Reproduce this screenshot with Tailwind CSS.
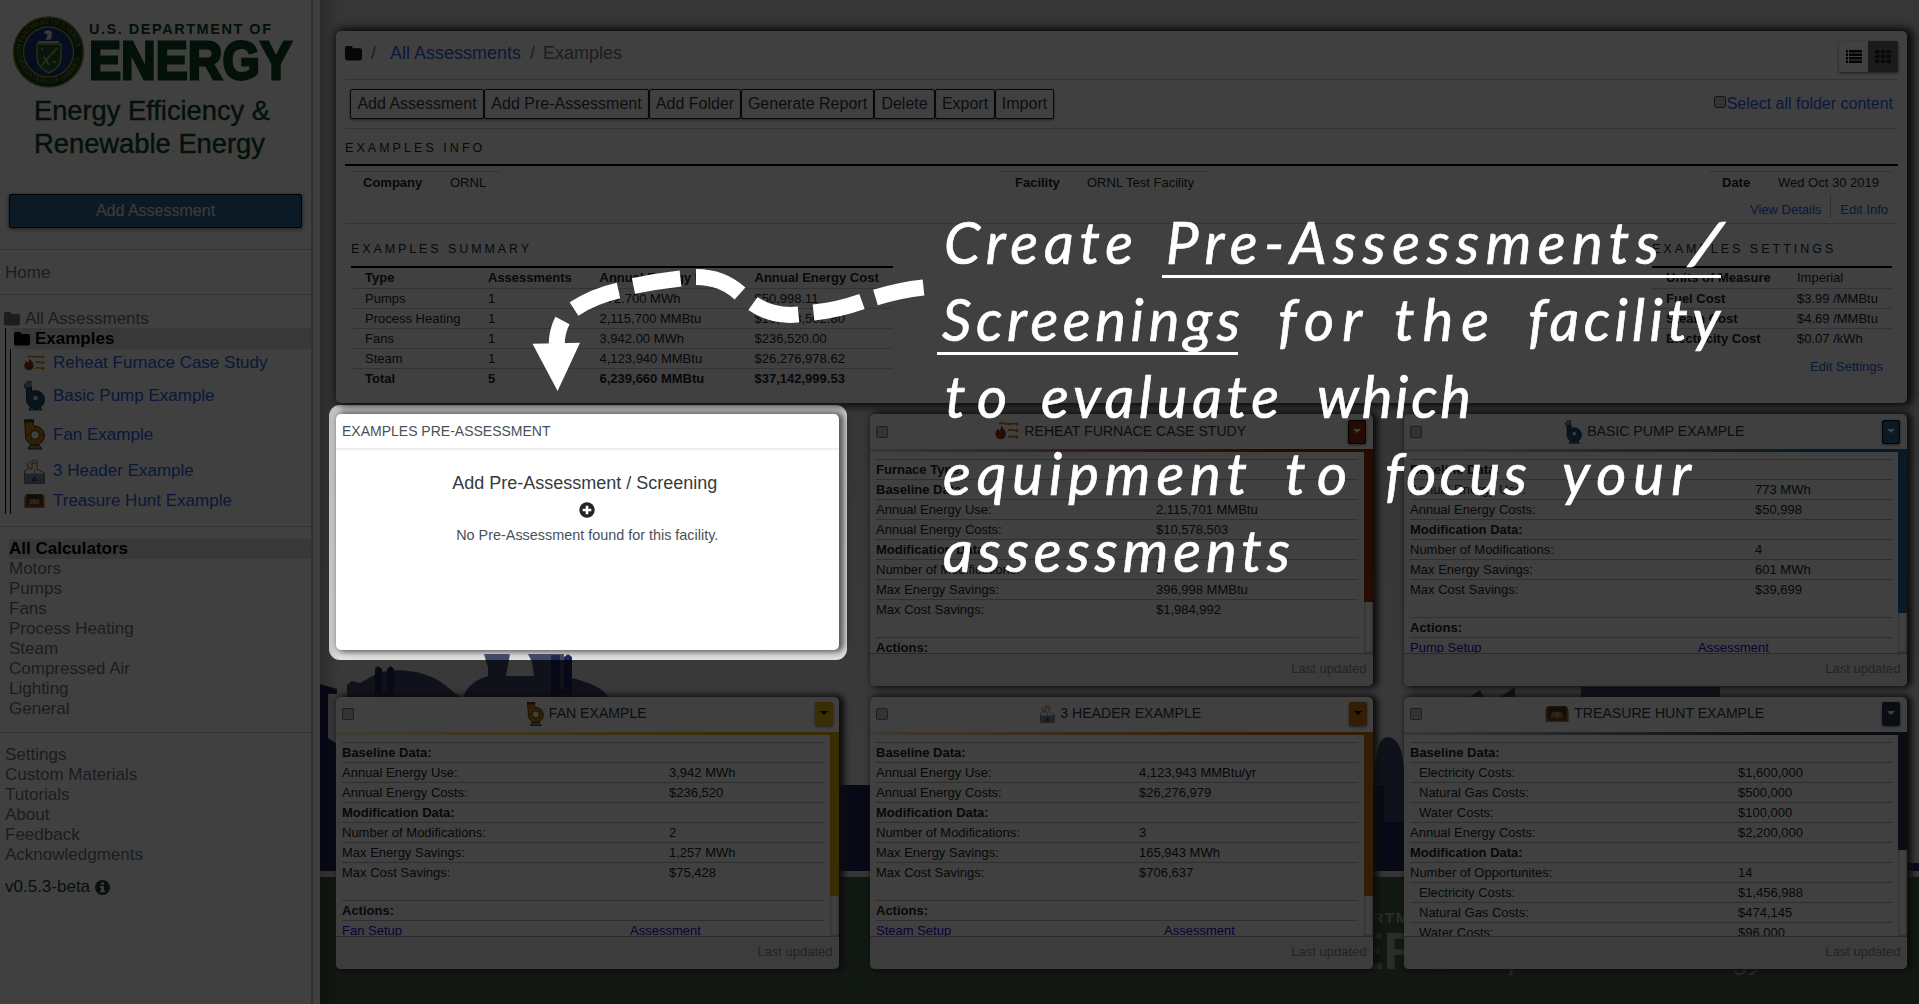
<!DOCTYPE html>
<html lang="en">
<head>
<meta charset="utf-8">
<title>Assessments</title>
<script src="https://cdn.jsdelivr.net/npm/@tailwindcss/browser@4"></script>
</head>
<body class="w-[1919px] h-[1004px] overflow-hidden bg-white font-['Liberation_Sans',Arial,sans-serif] text-[#212529]">
<svg class="hidden">
  <symbol id="folder" viewBox="0 0 16 14"><path d="M0 2.200C0 .9.8 0 2 0h3.400C6.600 0 7.200.9 7.200 2H14c1.200 0 2 .8 2 2v7.500c0 1.200-.8 2-2 2H2c-1.200 0-2-.8-2-2z" fill="currentColor"/></symbol>
  <symbol id="furnace" viewBox="0 0 24 18"><path d="M6 3c1 3 5 4.500 5 9a5.300 5.300 0 0 1-10.600 0C.4 9.500 2 8.500 2.500 6.500 3.500 7.500 4 8 4 9 6 7.500 6.500 5.500 6 3z" fill="#a02c08"/><path d="M4 2c3-2 6 0 9 0s6-1 9 0M13 8.500c3-1.500 6 .5 10 0M13 15c3-1.500 6 .5 10 0" fill="none" stroke="#cc7c12" stroke-width="1.800"/><path d="M21 0l3 2-3 2.200zM21 6.500l3 2-3 2.200zM21 13l3 2-3 2.200z" fill="#cc7c12"/></symbol>
  <symbol id="pump" viewBox="0 0 21 30"><path d="M5 29l2-4h9l2 4z" fill="#888" stroke="#333"/><path d="M2.500 6h5v4.500a9 9 0 1 1-5 7z" fill="#1a5680" stroke="#0c3048"/><circle cx="11.500" cy="17" r="3" fill="#ddd" stroke="#0c3048"/><path d="M1 7L0 3.500l3-1V0h4v6.500z" fill="#999" stroke="#333" stroke-width=".8"/></symbol>
  <symbol id="fan" viewBox="0 0 21 30"><path d="M4 29.500l2-4h9l3 4z" fill="#888" stroke="#333"/><path d="M.5.5h9v6.200A9.500 9.500 0 1 1 1.500 15z" fill="#c8880c" stroke="#4a3000"/><path d="M0 0h10v3H0z" fill="#5a3a00"/><circle cx="11" cy="15.500" r="4.200" fill="#fff" stroke="#5a3a00"/><path d="M11 7v3.500M11 20.500V24M3 15.500h3.500M15.500 15.500H19M5.500 10l2.500 2.500M14 18.500l2.500 2.500M16.500 10L14 12.500M8 18.500L5.500 21" stroke="#6a4600"/></symbol>
  <symbol id="steam" viewBox="0 0 21 25"><path d="M.5 14.500h20v10H.5z" fill="#6a9cc8"/><path d="M.5 24.500V12L5 9l3 1V4h5v6l7.500 4v10.500z" fill="none" stroke="#98672f"/><path d="M8 4V1h5v3M1 3l6 8M6 2L3 8M10.500 10v5" fill="none" stroke="#888"/><path d="M10.500 17c1 2 2.500 3 2.500 5h-5c0-2 1.500-3 2.500-5z" fill="#c33a10" stroke="#222" stroke-width=".6"/></symbol>
  <symbol id="chest" viewBox="0 0 21 14"><path d="M1 3c0-2 1-3 3-3h13c2 0 3 1 3 3v11H1z" fill="#6b4a22"/><path d="M4 1h13l1.500 8H2.500z" fill="#4a3418"/><path d="M6 5h9l1 5H5z" fill="#a8874c"/><path d="M1 13.500h19M1 3v11M20 3v11" stroke="#b8801e" stroke-width="1.400"/><path d="M10 6h1.200v4H10z" fill="#e8c878"/></symbol>
</svg>
<div class="relative flex w-full h-full overflow-hidden">

  <aside class="w-[313px] h-full shrink-0 border-r-2 border-[#c8c8c8] bg-white text-[17px] text-[#6c757d] leading-5">
    <svg class="block w-[311px] h-[194px]" viewBox="0 0 311 194">
      <circle cx="48.500" cy="52" r="35" fill="#11401f" stroke="#8a8420" stroke-width="1.500"/>
      <circle cx="48.500" cy="52" r="25" fill="#123a80" stroke="#b0a030" stroke-width="1.500"/>
      <path id="ringTop" d="M20.500 52a28 28 0 0 1 56 0" fill="none"/>
      <path id="ringBottom" d="M17 52a31.500 31.500 0 0 0 63 0" fill="none"/>
      <text font-size="7" fill="#a0982c" font-family="Liberation Serif"><textPath href="#ringTop" textLength="84">DEPARTMENT OF ENERGY</textPath></text>
      <text font-size="7" fill="#a0982c" font-family="Liberation Serif"><textPath href="#ringBottom" textLength="94">UNITED STATES OF AMERICA</textPath></text>
      <path d="M37 44h24v14c0 8-6 12-12 15-6-3-12-7-12-15z" fill="#1c5c38" stroke="#b8a83c" stroke-width="1.500"/>
      <path d="M41 66l16-18M44 57l5 8M41 49h2M52 62h4" stroke="#c8b848" stroke-width="1.500"/>
      <path d="M38 41h21v2H38z" fill="#c8c8c8"/><path d="M44 32c3-3 8-2 8 1l-1 6h3l-9 1c3-3 4-6-1-7z" fill="#e8e8e8"/>
      <g fill="#0c4520" font-family="Liberation Sans">
        <text x="89" y="34" font-size="14.500" font-weight="700" textLength="182">U.S. DEPARTMENT OF</text>
        <text x="89" y="79" font-size="54" font-weight="700" textLength="203" lengthAdjust="spacingAndGlyphs" stroke="#0c4520" stroke-width="2.800">ENERGY</text>
        <g stroke="#0c4520" stroke-width=".4"><text x="34" y="120" font-size="27.500" textLength="236" lengthAdjust="spacingAndGlyphs">Energy Efficiency &amp;</text>
        <text x="34" y="153" font-size="27.500" textLength="231" lengthAdjust="spacingAndGlyphs">Renewable Energy</text></g>
      </g>
    </svg>
    <div class="ml-[9px] w-[293px] h-[34px] border border-black rounded-[2px] bg-[#306898] shadow-[0_1px_4px_rgba(0,0,0,.6)] text-[#eee] text-[16px] leading-[31px] text-center">Add Assessment</div>
    <div class="mt-[21px] h-[45px] border-t border-dotted border-[#999] pl-[5px] leading-[46px]">Home</div>
    <div class="h-[34px] border-t border-dotted border-[#999] pl-1 pt-[14px] flex items-center"><svg class="w-4 h-3.5 mr-[5px]"><use href="#folder"/></svg>All Assessments</div>
    <div class="ml-[5px] border-l border-black h-[186px]">
      <div class="ml-2 h-[21px] bg-[#dedede] flex items-center text-black font-bold"><svg class="w-4 h-3.5 mr-[5px]"><use href="#folder"/></svg>Examples</div>
      <div class="ml-1 border-l border-black h-[165px] pl-[13px] text-[#2c60e4] flex flex-col">
        <div class="h-7 flex items-center"><svg class="w-[21px] h-4 mr-[8px]"><use href="#furnace"/></svg>Reheat Furnace Case Study</div>
        <div class="h-[37px] flex items-center"><svg class="w-[21px] h-[30px] mr-[8px]"><use href="#pump"/></svg>Basic Pump Example</div>
        <div class="h-[41px] flex items-center"><svg class="w-[21px] h-[31px] mr-[8px]"><use href="#fan"/></svg>Fan Example</div>
        <div class="h-[32px] flex items-center"><svg class="w-[21px] h-[25px] mr-[8px]"><use href="#steam"/></svg>3 Header Example</div>
        <div class="h-[27px] flex items-center"><svg class="w-[21px] h-[14px] mr-[8px]"><use href="#chest"/></svg>Treasure Hunt Example</div>
      </div>
    </div>
    <div class="mt-[12px] border-t border-dotted border-[#999] pt-3 pl-[9px] h-[206px]">
      <div class="bg-[#dedede] text-black font-bold">All Calculators</div>
      <div>Motors</div><div>Pumps</div><div>Fans</div><div>Process Heating</div><div>Steam</div><div>Compressed Air</div><div>Lighting</div><div>General</div>
    </div>
    <div class="border-t border-dotted border-[#999] pt-[12px] pl-[5px]">
      <div>Settings</div><div>Custom Materials</div><div>Tutorials</div><div>About</div><div>Feedback</div><div>Acknowledgments</div>
      <div class="mt-[12px] flex items-center text-[#1c4230]">v0.5.3-beta<svg class="ml-[5px] w-[15px] h-[15px]" viewBox="0 0 15 15"><circle cx="7.500" cy="7.500" r="7.500" fill="currentColor"/><path d="M6 2.500h3v2.300H6zM5 6h4v4.500h1.200v1.800H5v-1.800h1.200V7.800H5z" fill="#fff"/></svg></div>
    </div>
  </aside>
  <div class="w-[7px] h-full shrink-0 bg-[#fafafa]"></div>

  <main class="relative flex-1 h-full bg-[linear-gradient(#d6d6d6,#d6d6d6_45%,#e6e6e6_75%)]">
    <svg class="absolute inset-0 w-[1599px] h-[1004px]" viewBox="320 0 1599 1004">
      <g fill="#404a6c">
        <path d="M347 697v-12l5-4 8 2 18-10c20-6 50-2 67 12l15 12zM464 697c0-8 12-18 24-21v-8l-4-14h26l-4 22h28l-2-14-4-8h36v22c20 5 38 10 44 21zM1374 870v-95c3-30 6-37 14-38 9 0 16 12 16 38v95z"/>
        <path d="M1470 697l10-7 4 7zM1500 697l15-10v10zM1581 687h139v10h-139z"/>
      </g>
      <g fill="#1e2558">
        <path d="M320 684l17 5v5h-9v44l9 6v130h-17zM375 697v-28l3-3 4 3v22h5v-22l4-3 3 3v28zM551 697v-42h9v34h4v-32l4-3 4 3v40zM838 785h566v86H838zM1374 789h10v82h-10zM1384 822h20v49h-20zM1907 863h12v8h-12z"/>
      </g>
      <path d="M1384 775h20v47h-20z" fill="#404a6c"/>
      <path d="M320 871h1599v6H320z" fill="#d8d8d8"/>
      <path d="M320 877h1599v127H320z" fill="#486048"/>
      <g fill="#a8b4a8" font-family="Liberation Sans"><text x="1350" y="923" font-size="15" font-weight="700" letter-spacing="1.500">PARTMENT OF</text>
      <text x="1279" y="969" font-size="51" font-weight="700">ENERGY</text><text x="1763" y="969" font-size="30" text-anchor="end">Department of Energy</text></g>
    </svg>
    <div class="absolute inset-y-0 left-0 w-5 bg-linear-to-r from-black/20 to-transparent"></div>

    <section class="relative ml-[16px] mt-[31px] w-[1571px] h-[372px] rounded-[5px] bg-white shadow-[3px_0_8px_3px_#222] pl-[9px] pr-[9px] text-[13px]">
      <div class="h-[49px] border-b border-[#ccc] flex items-start justify-between">
        <div class="flex items-center h-[45px] text-[18px] text-[#6c757d]"><svg class="w-[17px] h-[15px] text-[#1a2320] mr-[9px]"><use href="#folder"/></svg>/<span class="text-[#2c60e4] ml-[14px] mr-[9px]">All Assessments</span>/<span class="ml-[8px]">Examples</span></div>
        <div class="flex mt-[10px] h-[31px] shadow-[0_1px_3px_rgba(0,0,0,.6)] rounded-[2px]">
          <div class="w-[29px] flex items-center justify-center"><svg class="w-4 h-[13px]" viewBox="0 0 16 13"><path d="M0 0h2v2.500H0zM3 0h13v2.500H3zM0 3.500h2V6H0zM3 3.500h13V6H3zM0 7h2v2.500H0zM3 7h13v2.500H3zM0 10.500h2V13H0zM3 10.500h13V13H3z" fill="#111"/></svg></div>
          <div class="w-[30px] bg-[#6c6c6c] flex items-center justify-center"><svg class="w-4 h-[13px]" viewBox="0 0 16 13"><path d="M0 0h4.500v3.500H0zM5.700 0h4.500v3.500H5.700zM11.500 0H16v3.500h-4.500zM0 4.700h4.500v3.500H0zM5.700 4.700h4.500v3.500H5.700zM11.500 4.700H16v3.500h-4.500zM0 9.500h4.500V13H0zM5.700 9.500h4.500V13H5.700zM11.500 9.500H16V13h-4.500z" fill="#222"/></svg></div>
        </div>
      </div>
      <div class="h-[49px] border-b border-[#ccc] flex items-center justify-between text-[16px] pl-[5px] pr-[5px]">
        <div class="flex h-[30px] leading-7 text-center text-[#343a40] *:border *:border-[#222] *:rounded-[2px] *:shadow-[0_1px_3px_rgba(0,0,0,.5)]">
          <div class="w-[134px]">Add Assessment</div><div class="w-[165px]">Add Pre-Assessment</div><div class="w-[92px]">Add Folder</div><div class="w-[133px]">Generate Report</div><div class="w-[61px]">Delete</div><div class="w-[60px]">Export</div><div class="w-[59px]">Import</div>
        </div>
        <div class="flex items-center text-[#2c60e4]"><span class="w-3 h-3 border border-[#555] rounded-[2px] bg-[#ccc] mr-[1px] -mt-1"></span>Select all folder content</div>
      </div>
      <h2 class="h-[37px] border-b-2 border-black leading-[39px] tracking-[3.050px] text-[12.500px]">EXAMPLES INFO</h2>
      <div class="flex pt-[5px] h-[28px] pl-[5px] leading-[21px]">
        <div class="border-t border-[#ccc] w-[151px] h-6 flex"><b class="ml-[13px] w-[87px]">Company</b>ORNL</div>
        <div class="border-t border-[#ccc] w-[207px] h-6 flex ml-[500px]"><b class="ml-[14px] w-[72px]">Facility</b>ORNL Test Facility</div>
        <div class="border-t border-[#ccc] w-[184px] h-6 flex ml-[501px]"><b class="ml-[13px] w-[56px]">Date</b>Wed Oct 30 2019</div>
      </div>
      <div class="h-[30px] border-b border-[#ccc] flex justify-end pr-[10px] text-[#2c60e4] leading-[32px] text-[13px]"><span class="mr-[9px]">View Details</span><span class="h-6 border-l border-[#bbb] pl-[9px]">Edit Info</span></div>
      <div class="flex justify-between pl-[6px] pr-[6px]">
        <div class="w-[542px]">
          <h2 class="h-[44px] border-b-2 border-black pt-[6px] leading-[39px] tracking-[2.900px] text-[12.500px]">EXAMPLES SUMMARY</h2>
          <div id="summary" class="text-[13px] leading-5"></div>
        </div>
        <div class="w-[240px]">
          <h2 class="h-[44px] border-b-2 border-black pt-[6px] leading-[39px] tracking-[3px] text-[12.500px] whitespace-nowrap">EXAMPLES SETTINGS</h2>
          <div id="settings" class="leading-5"></div>
          <div class="text-right pr-[9px] pt-[9px] leading-5 text-[#2c60e4]">Edit Settings</div>
        </div>
      </div>
    </section>

    <div id="cards" class="relative ml-[16px] mt-[11px] w-[1570px] grid grid-cols-[502.500px_502.500px_502.500px] auto-rows-[272px] gap-x-[31.500px] gap-y-[10.500px]">
      <section class="h-[236px] rounded-[5px] bg-white shadow-[3px_0_6px_2px_#555]">
        <h3 class="h-9 border-b-2 border-[#eee] pl-[6px] leading-[34px] text-[14px] text-[#495057]">EXAMPLES PRE-ASSESSMENT</h3>
        <div class="flex flex-col items-center pt-[23px] text-[#343a40]">
          <div class="text-[18px] leading-5 pr-[5px]">Add Pre-Assessment / Screening</div>
          <svg class="w-4 h-4 mt-[9px]" viewBox="0 0 16 16"><circle cx="8" cy="8" r="7.700" fill="#212529"/><path d="M8 3.700v8.600M3.700 8h8.600" stroke="#fff" stroke-width="2.600"/></svg>
          <div class="text-[14.400px] leading-5 mt-[7px] text-[#495057]">No Pre-Assessment found for this facility.</div>
        </div>
      </section>
    </div>
  </main>

  <div class="absolute left-[329px] top-[405px] w-[518px] h-[255px] rounded-[11px] shadow-[0_0_0_2000px_rgba(0,0,0,.75)]"></div>
  <svg class="absolute inset-0 w-[1919px] h-[1004px]" viewBox="0 0 1919 1004">
    <g fill="none" stroke="#fff" stroke-width="16">
      <path d="M923.500 287.500Q900 290 875.500 297.500M862 301.500Q838 310 813.500 312.500M798.500 314.500Q772 317 753 303.500M740 293.500Q722 277 696 277M680.500 278.500Q658 281 633.500 286M618.500 290.500Q594 296 574 309M562.500 320.500Q557 331 556.700 344"/>
    </g>
    <path d="M532.500 343.700L580 342.700 557.600 391z" fill="#fff"/>
    <path d="M1162 275h559v3h-559zM937 352h301v3H937z" fill="#fff"/>
    <g fill="#fff" font-family="Lato, sans-serif" font-style="italic" font-size="58" stroke="#fff" stroke-width=".7" id="note"></g>
  </svg>
</div>
<script>
const words = [
  [264, [['Create',944,189],['Pre-Assessments',1166,493],['/',1688,36]]],
  [341, [['Screenings',942,298],['for',1278,84],['the',1394,95],['facility',1528,192]]],
  [418, [['to',945,62],['evaluate',1041,238],['which',1317,154]]],
  [495, [['equipment',943,304],['to',1285,62],['focus',1385,142],['your',1562,129]]],
  [572, [['assessments',943,347]]]
];
document.getElementById('note').innerHTML = words.map(([y, ws]) => ws.map(([t, x, w]) =>
  `<text x="${x}" y="${y}" textLength="${w}" lengthAdjust="${t === '/' ? 'spacingAndGlyphs' : 'spacing'}">${t}</text>`).join('')).join('');

const summary = [
  ['Type','Assessments','Annual Energy Use','Annual Energy Cost'],
  ['Pumps','1','772.700 MWh','$50,998.11'],
  ['Process Heating','1','2,115,700 MMBtu','$10,578,502.80'],
  ['Fans','1','3,942.00 MWh','$236,520.00'],
  ['Steam','1','4,123,940 MMBtu','$26,276,978.62'],
  ['Total','5','6,239,660 MMBtu','$37,142,999.53']
];
document.getElementById('summary').innerHTML = summary.map((r, i) =>
  `<div class="grid grid-cols-[123px_111.500px_155px_1fr] pl-[14px] h-5 ${i ? 'border-t border-[#ccc]' : ''} ${i % 5 ? '' : 'font-bold'}">${r.map(c => `<span class="whitespace-nowrap">${c}</span>`).join('')}</div>`).join('');
document.getElementById('settings').innerHTML = [
  ['Units of Measure','Imperial'],['Fuel Cost','$3.99 /MMBtu'],['Steam Cost','$4.69 /MMBtu'],['Electricity Cost','$0.07 /kWh']
].map((r, i) => `<div class="flex pl-[14px] h-5 ${i ? 'border-t border-[#ccc]' : ''}"><b class="w-[131px]">${r[0]}</b>${r[1]}</div>`).join('');

const cards = [
  {t:'REHEAT FURNACE CASE STUDY', i:'furnace', iw:24, ih:18, c:'#942c08', thumb:152, col:280, caret:'#fff', edge:'#000', setup:'',
   rows:[['Furnace Type:'],['Baseline Data:'],['Annual Energy Use:','2,115,701 MMBtu'],['Annual Energy Costs:','$10,578,503'],['Modification Data:'],['Number of Modifications:','5'],['Max Energy Savings:','396,998 MMBtu'],['Max Cost Savings:','$1,984,992']]},
  {t:'BASIC PUMP EXAMPLE', i:'pump', iw:17, ih:24, c:'#2a648e', thumb:163, col:345, caret:'#fff', edge:'#000', setup:'Pump Setup',
   rows:[['Baseline Data:'],['Annual Energy Use:','773 MWh'],['Annual Energy Costs:','$50,998'],['Modification Data:'],['Number of Modifications:','4'],['Max Energy Savings:','601 MWh'],['Max Cost Savings:','$39,699']]},
  {t:'FAN EXAMPLE', i:'fan', iw:17, ih:24, c:'#e4b410', thumb:163, col:327, caret:'#000', edge:'#e4b410', setup:'Fan Setup',
   rows:[['Baseline Data:'],['Annual Energy Use:','3,942 MWh'],['Annual Energy Costs:','$236,520'],['Modification Data:'],['Number of Modifications:','2'],['Max Energy Savings:','1,257 MWh'],['Max Cost Savings:','$75,428']]},
  {t:'3 HEADER EXAMPLE', i:'steam', iw:15, ih:18, c:'#d07410', thumb:163, col:263, caret:'#000', edge:'#d07410', setup:'Steam Setup',
   rows:[['Baseline Data:'],['Annual Energy Use:','4,123,943 MMBtu/yr'],['Annual Energy Costs:','$26,276,979'],['Modification Data:'],['Number of Modifications:','3'],['Max Energy Savings:','165,943 MWh'],['Max Cost Savings:','$706,637']]},
  {t:'TREASURE HUNT EXAMPLE', i:'chest', iw:24, ih:16, c:'#2a3644', thumb:117, col:328, caret:'#fff', edge:'#2a3644', setup:null,
   rows:[['Baseline Data:'],['Electricity Costs:','$1,600,000',1],['Natural Gas Costs:','$500,000',1],['Water Costs:','$100,000',1],['Annual Energy Costs:','$2,200,000'],['Modification Data:'],['Number of Opportunites:','14'],['Electricity Costs:','$1,456,988',1],['Natural Gas Costs:','$474,145',1],['Water Costs:','$96,000',1]]}
];
document.getElementById('cards').innerHTML += cards.map(d => `
<section class="h-[272px] rounded-[5px] bg-white shadow-[3px_0_6px_2px_#333] flex flex-col text-[13px]">
  <div class="h-[35px] px-[6px] flex items-center justify-between">
    <span class="w-3 h-3 border border-[#777] rounded-[2px] bg-[#ccc]"></span>
    <h3 class="flex items-center text-[14.100px] pl-[5px] text-[#343a40]"><svg class="mr-[5px]" width="${d.iw}" height="${d.ih}"><use href="#${d.i}"/></svg>${d.t}</h3>
    <span class="w-[18px] h-6 rounded-[2px] border flex justify-center pt-[8px] shadow-[0_1px_3px_rgba(0,0,0,.5)]" style="background:${d.c};border-color:${d.edge}"><svg width="8" height="4"><path d="M0 0h8L4 4z" fill="${d.caret}"/></svg></span>
  </div>
  <div class="h-[3px]" style="background:linear-gradient(90deg,${d.c}33,${d.c} 80%)"></div>
  <div class="h-[201px] flex overflow-hidden">
    <div class="flex-1 pl-[6px] pr-[6px] pt-[7px] leading-[19px]">
      ${d.rows.map(r => `<div class="h-5 flex border-t border-[#bbb] ${r[1] ? '' : 'font-bold'}"><span class="shrink-0 ${r[2] ? 'pl-[9px]' : ''}" style="width:${d.col}px">${r[0]}</span>${r[1] || ''}</div>`).join('')}
      ${d.setup === null ? '' : `<div class="mt-[18px] h-5 border-t border-[#bbb] font-bold">Actions:</div>`}
      ${d.setup ? `<div class="h-5 border-t border-[#bbb] text-[#3800e0] flex"><span class="w-[288px]">${d.setup}</span>Assessment</div>` : ''}
    </div>
    <div class="w-[9px] bg-white shadow-[inset_0_0_3px_#777]"><div style="height:${d.thumb - 2}px;background:${d.c}"></div></div>
  </div>
  <div class="flex-1 border-t border-[#aaa] rounded-b-[5px] bg-[#f0f0f0] text-right pr-[6px] leading-[30px] text-[#868e96]">Last updated</div>
</section>`).join('');
</script>
</body>
</html>
